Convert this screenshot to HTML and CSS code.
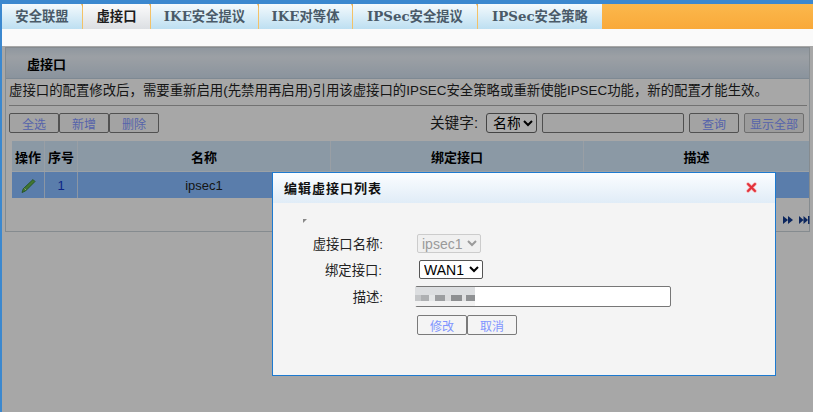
FILE: index.html
```html
<!DOCTYPE html>
<html lang="zh-CN">
<head>
<meta charset="utf-8">
<title>虚接口</title>
<link rel="stylesheet" href="styles.css">
</head>
<body>
<div class="page">
  <nav class="tabs">
    <a class="tab tab-1">安全联盟</a>
    <a class="tab tab-2 active">虚接口</a>
    <a class="tab tab-3">IKE安全提议</a>
    <a class="tab tab-4">IKE对等体</a>
    <a class="tab tab-5">IPSec安全提议</a>
    <a class="tab tab-6 last">IPSec安全策略</a>
  </nav>
  <section class="panel">
    <h2 class="panel-title">虚接口</h2>
    <p class="notice">虚接口的配置修改后，需要重新启用(先禁用再启用)引用该虚接口的IPSEC安全策略或重新使能IPSEC功能，新的配置才能生效。</p>
    <div class="toolbar">
      <div class="btn-group">
        <button class="btn">全选</button><button class="btn">新增</button><button class="btn">删除</button>
      </div>
      <div class="search">
        <span class="search-label">关键字:</span>
        <select class="sel-key"><option>名称</option></select>
        <input class="search-input" type="text">
        <button class="btn btn-query">查询</button>
        <button class="btn btn-all">显示全部</button>
      </div>
    </div>
    <table class="grid">
      <thead>
        <tr><th class="c-op">操作</th><th class="c-no">序号</th><th class="c-name">名称</th><th class="c-bind">绑定接口</th><th>描述</th></tr>
      </thead>
      <tbody>
        <tr>
          <td><svg class="pencil" width="16" height="16" viewBox="0 0 16 16"><path d="M13 1.500l2 2-9.500 9.500-3.500 1.500 1.200-3.700z" fill="#63b04a" stroke="#2f7526" stroke-width=".8"/><path d="M4.500 10.500l1.500 1.500" stroke="#cfe8b0" stroke-width="1"/></svg></td>
          <td class="num">1</td>
          <td>ipsec1</td>
          <td></td>
          <td></td>
        </tr>
      </tbody>
    </table>
    <div class="pager">
      <svg width="10" height="10" viewBox="0 0 10 10"><path d="M0 1l5 4-5 4zM5 1l5 4-5 4z" fill="#123a8c"/></svg>
      <svg width="11" height="10" viewBox="0 0 11 10"><path d="M0 1l4.500 4-4.500 4zM4.500 1l4.500 4-4.500 4z" fill="#123a8c"/><rect x="9" y="1" width="1.500" height="8" fill="#123a8c"/></svg>
    </div>
  </section>
</div>
<div class="overlay"></div>
<div class="dialog">
  <header class="dialog-head">
    <h3 class="dialog-title">编辑虚接口列表</h3>
    <svg class="close" width="11" height="11" viewBox="0 0 11 11"><path d="M2 2l7 7M9 2l-7 7" stroke="#f6b0b0" stroke-width="3.400" stroke-linecap="round"/><path d="M2 2l7 7M9 2l-7 7" stroke="#e2303a" stroke-width="2" stroke-linecap="round"/></svg>
  </header>
  <div class="dialog-body">
    <span class="tick"></span>
    <form class="form">
      <label class="f-label">虚接口名称:</label>
      <select class="f-sel f-sel-name" disabled><option>ipsec1</option></select>
      <label class="f-label l-bind">绑定接口:</label>
      <select class="f-sel f-sel-bind"><option>WAN1</option></select>
      <label class="f-label">描述:</label>
      <div class="f-desc">
        <input class="f-input" type="text">
        <div class="mosaic"></div>
      </div>
      <span></span>
      <div class="f-actions"><button class="btn" type="button">修改</button><button class="btn" type="button">取消</button></div>
    </form>
  </div>
</div>
</body>
</html>
```

FILE: styles.css
```css
* { box-sizing: border-box; }
html, body { margin: 0; padding: 0; height: 100%; }
body {
  font-family: "Liberation Sans", "Noto Sans CJK SC", sans-serif;
  font-size: 13px;
  color: #000;
  background: #fafafa;
  overflow: hidden;
}
.page {
  height: 412px;
  border-top: 4px solid #3b88cf;
  border-left: 2px solid #3b88cf;
}
.tabs {
  display: flex;
  height: 25px;
  background: linear-gradient(#fbb84c, #f9a93a);
}
.tab {
  position: relative;
  height: 25px;
  line-height: 24px;
  text-align: center;
  font-family: "DejaVu Serif", "Noto Sans CJK SC", serif;
  font-weight: bold;
  font-size: 13.33px;
  color: #4a5a68;
  background: linear-gradient(#f4fafd, #bddff1);
  border-right: 1px solid #f3c267;
}
.tab::after {
  content: "";
  position: absolute;
  top: 0;
  right: -3px;
  border-top: 4px solid #eab056;
  border-left: 2.500px solid transparent;
  border-right: 2.500px solid transparent;
}
.tab.last { border-right: 0; }
.tab.last::after { display: none; }
.tab.active { color: #1c1c1c; background: linear-gradient(#fbfbfb, #dcdfe3); }
.tab-1 { width: 81px; }
.tab-2 { width: 68px; }
.tab-3 { width: 108px; }
.tab-4 { width: 94px; }
.tab-5 { width: 125px; }
.tab-6 { width: 124px; }

.panel {
  position: relative;
  margin: 18px 3px 0 3px;
  height: 185px;
  border: 1px solid #c6cfd6;
  background: #fafafa;
}
.panel-title {
  margin: 0;
  height: 31px;
  padding-left: 21px;
  line-height: 33px;
  font-size: 13px;
  font-weight: bold;
  border-bottom: 1px solid #bccddc;
  background: linear-gradient(#d6e2ee, #e9eff6 30%, #cedceb);
}
.notice {
  margin: 0 2px 0 3px;
  height: 27px;
  line-height: 23px;
  font-size: 13.4px;
  white-space: nowrap;
  color: #222;
  border-bottom: 1px solid #aaa;
}
.toolbar {
  display: flex;
  justify-content: space-between;
  margin-top: 7px;
  padding: 0 5px 0 3px;
  height: 21px;
}
.btn-group { display: flex; }
.btn {
  height: 20px;
  width: 50px;
  padding: 0;
  font: 12px "Liberation Sans", "Noto Sans CJK SC", sans-serif;
  color: #8094ff;
  background: #f4f4f4;
  border: 1px solid #7a7a7a;
  border-radius: 2px;
}
.search { display: flex; align-items: flex-start; }
.search-label { line-height: 20px; margin-right: 8px; font-size: 14.67px; color: #222; }
.sel-key {
  width: 51px;
  height: 20px;
  padding: 0 0 0 2px;
  margin-right: 5px;
  font: 14px "Liberation Sans", "Noto Sans CJK SC", sans-serif;
  background: #fff;
  border: 1px solid #666;
  border-radius: 3px;
}
.search-input {
  width: 142px;
  height: 20px;
  margin-right: 5px;
  background: #f7f7f7;
  border: 1px solid #777;
  border-radius: 2px;
}
.btn-query { margin-right: 5px; }
.btn-all { width: 60px; border-color: #a5a5a5; background: #e9e9e9; }
.grid {
  width: 797px;
  margin: 7px 0 0 6px;
  border-collapse: separate;
  border-spacing: 0;
  table-layout: fixed;
}
.grid th {
  height: 31px;
  padding: 0;
  font-size: 13px;
  font-weight: bold;
  background: #cfe4f7;
  border-right: 1px solid #e4eef6;
  border-bottom: 1px solid #e8f1f8;
}
.grid td {
  height: 26px;
  padding: 0;
  text-align: center;
  font-size: 13px;
  color: #222;
  background: #86bbff;
  border-right: 1px solid #cfe0f5;
}
.grid th:last-child, .grid td:last-child { border-right: 0; }
.grid .c-op { width: 33px; }
.grid .c-no { width: 33px; }
.grid .c-name { width: 253px; }
.grid .c-bind { width: 253px; }
.grid .num { color: #1236c8; }
.pencil { display: block; margin: 2px auto 0; }
.pager {
  position: absolute;
  right: -1px;
  top: 167px;
  display: flex;
  gap: 6px;
}
.overlay {
  position: absolute;
  left: 2px;
  top: 46px;
  right: 0;
  bottom: 0;
  background: rgba(0, 0, 0, .33);
}
.dialog {
  position: absolute;
  left: 272px;
  top: 172px;
  width: 504px;
  height: 204px;
  display: flex;
  flex-direction: column;
  background: #f4f4f4;
  border: 1px solid #1d7ad0;
}
.dialog-head {
  display: flex;
  justify-content: space-between;
  align-items: center;
  height: 30px;
  padding: 0 18px 2px 11px;
  background: linear-gradient(#fbfdff, #e0ecf7);
}
.dialog-title {
  margin: 0;
  font-size: 13px;
  font-weight: bold;
  letter-spacing: 1px;
  color: #111;
}
.dialog-body { position: relative; flex: 1; }
.tick {
  position: absolute;
  left: 30px;
  top: 16px;
  width: 4px;
  height: 4px;
  background: #888;
  clip-path: polygon(0 0, 100% 0, 0 100%);
}
.form {
  display: grid;
  grid-template-columns: 110px 300px;
  column-gap: 32px;
  align-items: center;
  grid-template-rows: 20px 20px 23px 22px;
  row-gap: 6px;
  padding-top: 30px;
}
.f-label { text-align: right; font-size: 13.33px; color: #222; }
.l-bind { padding-right: 1px; }
.f-sel {
  justify-self: start;
  height: 19px;
  width: 64px;
  padding: 0;
  font: 14px "Liberation Sans", sans-serif;
  background: #fff;
  border: 1px solid #555;
  border-radius: 2px;
}
.f-sel-name { margin-left: 2px; }
.f-sel-bind { margin-left: 4px; }
.f-sel:disabled { color: #9a9a9a; border-color: #ccc; background: #f0f0f0; opacity: 1; }
.f-desc { position: relative; width: 256px; height: 21px; }
.f-input {
  display: block;
  width: 256px;
  height: 21px;
  background: #fff;
  border: 1px solid #777;
  border-radius: 2px;
}
.mosaic {
  position: absolute;
  left: 0;
  top: 1px;
  width: 60px;
  height: 19px;
  background:
    linear-gradient(90deg, #c4c6c8 6px, #aeb0b2 6px 14px, #e4e6e7 14px 20px, #9c9ea0 20px 30px, #dcddde 30px 36px, #8d8f91 36px 47px, #e0e1e2 47px 51px, #8f9193 51px 60px) 0 8px / 60px 6px no-repeat,
    linear-gradient(#dcdee0 0 14px, #f2f2f2 14px);
}
.f-actions { display: flex; margin-left: 2px; }
```
